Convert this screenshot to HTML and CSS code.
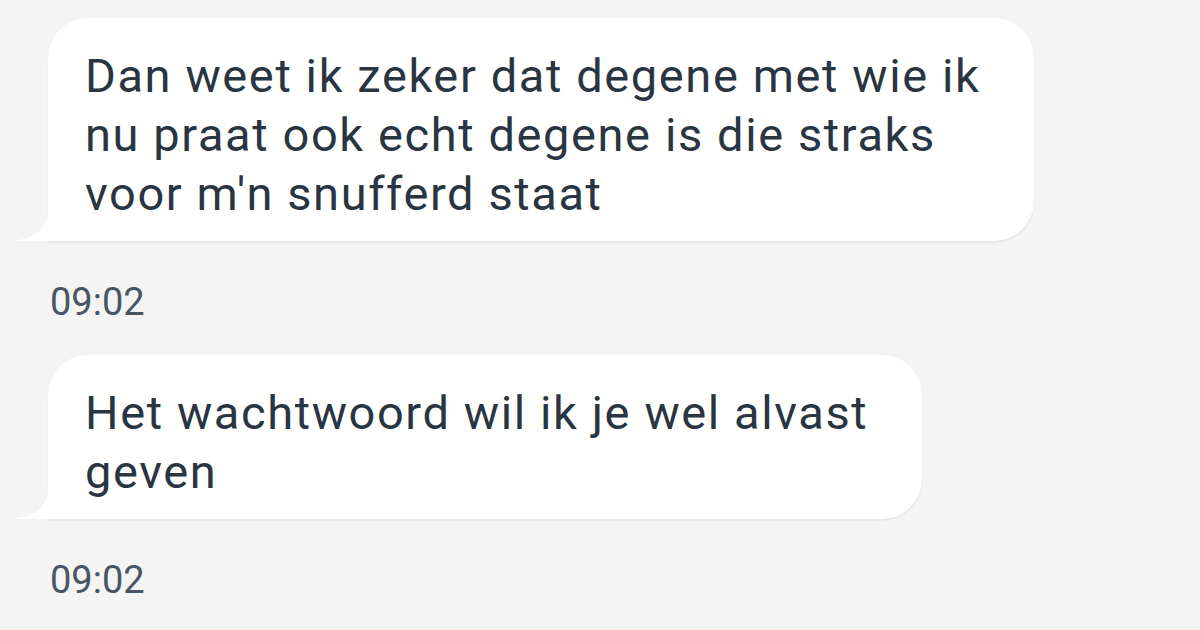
FILE: index.html
```html
<!DOCTYPE html>
<html lang="nl">
<head>
    <meta charset="UTF-8">
    <meta name="viewport" content="width=device-width, initial-scale=1.0">
    <title>Chat</title>
    <link rel="stylesheet" href="styles.css">
</head>
<body>
    <div class="chat">
        <div class="message">
            <div class="bubble">
                Dan weet ik zeker dat degene met wie ik<br>
                nu praat ook echt degene is die straks<br>
                voor m'n snufferd staat
                <svg class="tail" viewBox="0 0 40 44" width="40" height="44"><path d="M40 0 C40 26 32 42 0 44 L40 44 Z" fill="#fff"/></svg>
            </div>
            <div class="time">09:02</div>
        </div>
        <div class="message">
            <div class="bubble">
                Het wachtwoord wil ik je wel alvast<br>
                geven
                <svg class="tail" viewBox="0 0 40 44" width="40" height="44"><path d="M40 0 C40 26 32 42 0 44 L40 44 Z" fill="#fff"/></svg>
            </div>
            <div class="time">09:02</div>
        </div>
    </div>
</body>
</html>
```

FILE: styles.css
```css
body {
    margin: 0;
    background-color: #f4f4f4;
    font-family: Roboto, "Noto Sans", sans-serif;
}

.chat {
    display: flex;
    flex-direction: column;
    padding: 18px 0 0 48px;
}

.message {
    display: flex;
    flex-direction: column;
    align-items: flex-start;
}

.bubble {
    position: relative;
    background-color: #fff;
    color: #2a3542;
    font-size: 47px;
    letter-spacing: 1.6px;
    line-height: 59px;
    padding: 28px 54px 18px 37px;
    border-radius: 40px 40px 40px 0;
    box-shadow: 0 2px 2px rgba(0, 0, 0, 0.06);
}

/* little tail on the bottom left */
.tail {
    position: absolute;
    left: -38px;
    bottom: 0;
    display: block;
}

.time {
    color: #4a5563;
    font-size: 38px;
    line-height: 44px;
    margin: 39px 0 31px 2px;
}
```
